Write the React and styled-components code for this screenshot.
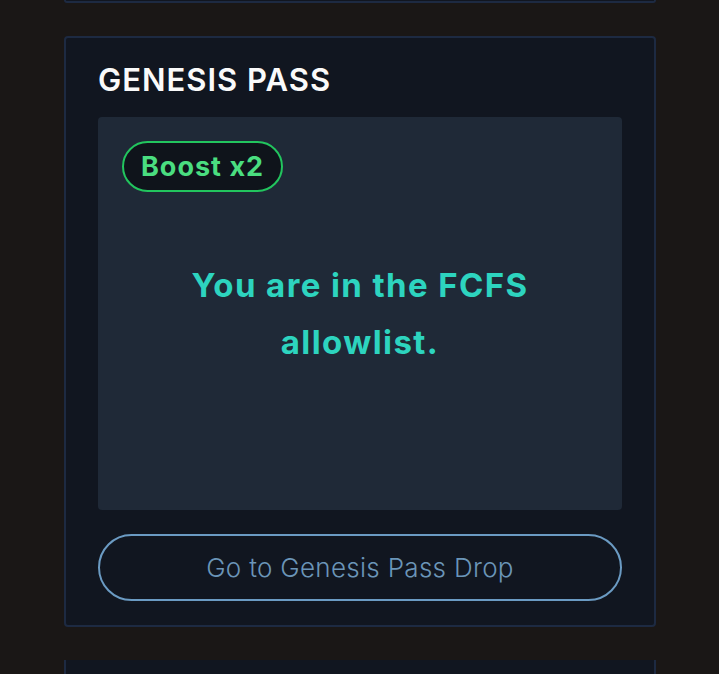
import React from "react";
import styled, { createGlobalStyle } from "styled-components";

const Global = createGlobalStyle`
    body {
        margin:0;
        background:#1a1716;
        font-family:Inter, "Noto Sans", sans-serif;
    }
`
const Column = styled.div`
    width:592px;
    margin-left:64px;
    display:flex;
    flex-direction:column;
    gap:33px;
`
const Card = styled.div`
    box-sizing:border-box;
    background:#111620;
    border:2px solid #1d2a42;
    border-radius:4px;
    padding:${p => p.$stub ? "0" : "25px 32px 24px 32px"};
    height:${p => p.$stub ? "3px" : "auto"};
    border-top-width:${p => p.$stub ? "0" : "2px"};
    border-top-left-radius:${p => p.$stub ? "0" : "4px"};
    border-top-right-radius:${p => p.$stub ? "0" : "4px"};
`
const Title = styled.h2`
    margin:0 0 20px 0;
    font-size:31px;
    line-height:34px;
    font-weight:600;
    color:#fafafa;
    letter-spacing:1px;
`
const Panel = styled.div`
    position:relative;
    height:393px;
    background:#1f2937;
    border-radius:4px;
    display:flex;
    align-items:center;
    justify-content:center;
`
const Badge = styled.span`
    position:absolute;
    top:24px;
    left:24px;
    box-sizing:border-box;
    height:51px;
    padding:0 17px;
    display:flex;
    align-items:center;
    border:2px solid #22c55e;
    border-radius:999px;
    background:#0f141b;
    color:#4ade80;
    font-size:27px;
    font-weight:700;
    letter-spacing:1px;
`
const Status = styled.p`
    margin:0;
    text-align:center;
    color:#2dd4bf;
    font-size:33px;
    line-height:57px;
    font-weight:700;
    letter-spacing:1.4px;
`
const DropButton = styled.button`
    box-sizing:border-box;
    width:100%;
    height:67px;
    margin-top:24px;
    border:2px solid #6b9bc3;
    border-radius:999px;
    background:transparent;
    color:#6b95b8;
    font-family:inherit;
    font-size:26px;
    font-weight:300;
    letter-spacing:0.3px;
`

const App = () => {
    return(
        <>
            <Global/>
            <Column>
                <Card $stub/>
                <Card>
                    <Title>GENESIS PASS</Title>
                    <Panel>
                        <Badge>Boost x2</Badge>
                        <Status>You are in the FCFS<br/>allowlist.</Status>
                    </Panel>
                    <DropButton>Go to Genesis Pass Drop</DropButton>
                </Card>
                <Card $stub style={{height: 40}}/>
            </Column>
        </>
    )
}

export default App;
